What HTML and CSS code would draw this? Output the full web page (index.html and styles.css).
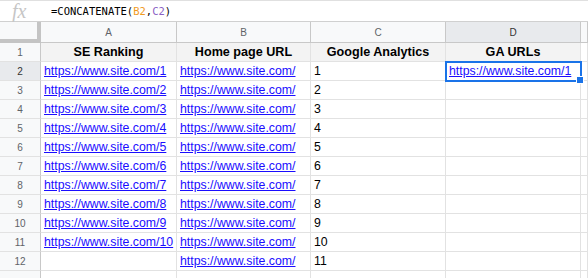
FILE: index.html
```html
<!DOCTYPE html>
<html lang="en">

<head>
    <meta charset="UTF-8">
    <meta name="viewport" content="width=device-width, initial-scale=1.0">
    <title>GA URLs</title>
    <link rel="stylesheet" href="styles.css">
</head>

<body>
    <div class="formula-bar">
        <span class="fx">fx</span>
        <span class="formula">=CONCATENATE(<span class="ref-b">B2</span>,<span class="ref-c">C2</span>)</span>
    </div>

    <div class="sheet">
        <!-- column headers -->
        <div class="corner"></div>
        <div class="col-head">A</div>
        <div class="col-head">B</div>
        <div class="col-head">C</div>
        <div class="col-head active">D</div>
        <div class="col-head"></div>

        <!-- row 1 -->
        <div class="row-head">1</div>
        <div class="cell title">SE Ranking</div>
        <div class="cell title">Home page URL</div>
        <div class="cell title">Google Analytics</div>
        <div class="cell title">GA URLs</div>
        <div class="cell"></div>

        <div class="row-head active">2</div>
        <div class="cell"><a href="#">https://www.site.com/1</a></div>
        <div class="cell"><a href="#">https://www.site.com/</a></div>
        <div class="cell">1</div>
        <div class="cell selected"><a href="#">https://www.site.com/1</a><span class="handle"></span></div>
        <div class="cell"></div>

        <div class="row-head">3</div>
        <div class="cell"><a href="#">https://www.site.com/2</a></div>
        <div class="cell"><a href="#">https://www.site.com/</a></div>
        <div class="cell">2</div>
        <div class="cell"></div>
        <div class="cell"></div>

        <div class="row-head">4</div>
        <div class="cell"><a href="#">https://www.site.com/3</a></div>
        <div class="cell"><a href="#">https://www.site.com/</a></div>
        <div class="cell">3</div>
        <div class="cell"></div>
        <div class="cell"></div>

        <div class="row-head">5</div>
        <div class="cell"><a href="#">https://www.site.com/4</a></div>
        <div class="cell"><a href="#">https://www.site.com/</a></div>
        <div class="cell">4</div>
        <div class="cell"></div>
        <div class="cell"></div>

        <div class="row-head">6</div>
        <div class="cell"><a href="#">https://www.site.com/5</a></div>
        <div class="cell"><a href="#">https://www.site.com/</a></div>
        <div class="cell">5</div>
        <div class="cell"></div>
        <div class="cell"></div>

        <div class="row-head">7</div>
        <div class="cell"><a href="#">https://www.site.com/6</a></div>
        <div class="cell"><a href="#">https://www.site.com/</a></div>
        <div class="cell">6</div>
        <div class="cell"></div>
        <div class="cell"></div>

        <div class="row-head">8</div>
        <div class="cell"><a href="#">https://www.site.com/7</a></div>
        <div class="cell"><a href="#">https://www.site.com/</a></div>
        <div class="cell">7</div>
        <div class="cell"></div>
        <div class="cell"></div>

        <div class="row-head">9</div>
        <div class="cell"><a href="#">https://www.site.com/8</a></div>
        <div class="cell"><a href="#">https://www.site.com/</a></div>
        <div class="cell">8</div>
        <div class="cell"></div>
        <div class="cell"></div>

        <div class="row-head">10</div>
        <div class="cell"><a href="#">https://www.site.com/9</a></div>
        <div class="cell"><a href="#">https://www.site.com/</a></div>
        <div class="cell">9</div>
        <div class="cell"></div>
        <div class="cell"></div>

        <div class="row-head">11</div>
        <div class="cell"><a href="#">https://www.site.com/10</a></div>
        <div class="cell"><a href="#">https://www.site.com/</a></div>
        <div class="cell">10</div>
        <div class="cell"></div>
        <div class="cell"></div>

        <div class="row-head">12</div>
        <div class="cell"></div>
        <div class="cell"><a href="#">https://www.site.com/</a></div>
        <div class="cell">11</div>
        <div class="cell"></div>
        <div class="cell"></div>

        <!-- row 13, only its top edge is in view -->
        <div class="row-head"></div>
        <div class="cell"></div>
        <div class="cell"></div>
        <div class="cell"></div>
        <div class="cell"></div>
        <div class="cell"></div>
    </div>
</body>

</html>
```

FILE: styles.css
```css
body {
    margin: 0;
    font-family: 'Liberation Sans', Arial, sans-serif;
    background: #fff;
    overflow: hidden;
}

/* formula bar */
.formula-bar {
    height: 20px;
    border-top: 1px solid #e0e0e0;
    border-bottom: 1px solid #d0d0d0;
    display: flex;
    align-items: center;
    box-sizing: content-box;
}

.fx {
    width: 51px;
    padding-left: 12px;
    box-sizing: border-box;
    font-family: 'Liberation Serif', serif;
    font-style: italic;
    font-size: 20px;
    color: #c6c6c6;
    line-height: 20px;
}

.formula {
    font-family: 'DejaVu Sans Mono', monospace;
    font-size: 10.5px;
    color: #000;
}

.ref-b {
    color: #f09a1e;
}

.ref-c {
    color: #8a5fc4;
}

/* grid */
.sheet {
    display: grid;
    grid-template-columns: 41px 136px 134px 135px 135px 1fr;
    grid-template-rows: 21px;
    grid-auto-rows: 19px;
}

.corner {
    background: #f8f9fa;
    border-right: 4px solid #c4c4c4;
    border-bottom: 4px solid #c4c4c4;
    box-sizing: border-box;
}

.col-head {
    background: #f8f9fa;
    border-right: 1px solid #c8c8c8;
    border-bottom: 1px solid #c8c8c8;
    color: #5f6368;
    font-size: 10px;
    display: flex;
    align-items: center;
    justify-content: center;
    box-sizing: border-box;
}

.row-head {
    background: #f8f9fa;
    border-right: 1px solid #c8c8c8;
    border-bottom: 1px solid #e2e2e2;
    color: #5f6368;
    font-size: 10px;
    display: flex;
    align-items: center;
    justify-content: center;
    box-sizing: border-box;
}

.col-head.active,
.row-head.active {
    background: #e8eaed;
    color: #333;
}

.cell {
    border-right: 1px solid #e2e2e2;
    border-bottom: 1px solid #e2e2e2;
    font-size: 12.3px;
    color: #000;
    padding: 0 3px;
    display: flex;
    align-items: center;
    white-space: nowrap;
    overflow: visible;
    box-sizing: border-box;
    position: relative;
}

.cell.title {
    background: #f3f3f3;
    font-weight: bold;
    justify-content: center;
    font-size: 12.6px;
}

.cell a {
    color: #1a0dff;
    text-decoration: underline;
}

.cell.selected {
    outline: 2px solid #1a73e8;
    outline-offset: -1px;
    z-index: 1;
}

.handle {
    position: absolute;
    right: -4px;
    bottom: -4px;
    width: 6px;
    height: 6px;
    background: #1a73e8;
    border: 1px solid #fff;
}
```
